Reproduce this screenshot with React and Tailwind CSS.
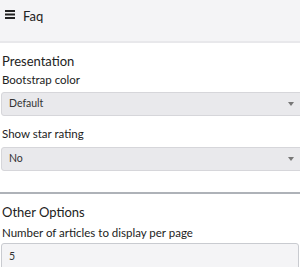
import React from 'react'

const Select = ({ value }) => (
  <div className="relative flex h-[24px] w-[310px] items-center rounded-[3px] border border-[#d6d6da] bg-[#e9e9ec] pl-[7px] text-[10.5px] text-[#333]">
    {value}
    <span className="absolute left-[286px] top-[9px] h-0 w-0 border-x-[3px] border-t-[4px] border-x-transparent border-t-[#777]" />
  </div>
)

export default function App() {
  return (
    <div className="h-[267px] w-[300px] overflow-hidden bg-white font-['Lato',sans-serif] text-[#222]">
      <div className="flex h-[43px] items-start gap-[8px] border-b-2 border-[#e8e8eb] bg-[#f4f4f6] pl-[5px] pt-[8px]">
        <svg width="10" height="9" viewBox="0 0 10 9" className="mt-[2px]">
          <rect x="0" y="0" width="10" height="2" fill="#222" />
          <rect x="0" y="3.5" width="10" height="2" fill="#222" />
          <rect x="0" y="7" width="10" height="2" fill="#222" />
        </svg>
        <span className="text-[13px] leading-[17px]">Faq</span>
      </div>

      <div className="pl-[1px]">
        <h2 className="mt-[9px] pl-[1px] text-[13px] leading-[18px]">Presentation</h2>
        <label className="mt-[2px] block pl-[1px] text-[11.5px] leading-[16px]">Bootstrap color</label>
        <div className="mt-[4px]">
          <Select value="Default" />
        </div>
        <label className="mt-[10px] block pl-[1px] text-[11.5px] leading-[16px]">Show star rating</label>
        <div className="mt-[5px]">
          <Select value="No" />
        </div>
      </div>

      <hr className="mt-[21px] border-t-2 border-[#aeb2b8]" />

      <div className="pl-[1px]">
        <h2 className="mt-[9px] pl-[1px] text-[13px] leading-[18px]">Other Options</h2>
        <label className="mt-[4px] block pl-[1px] text-[11.5px] leading-[16px]">
          Number of articles to display per page
        </label>
        <div className="mt-[2px] flex h-[28px] w-[298px] items-center rounded-[3px] border border-[#c9cbd0] bg-[#f4f4f6] pl-[7px] text-[10.5px] text-[#333]">
          5
        </div>
      </div>
    </div>
  )
}
